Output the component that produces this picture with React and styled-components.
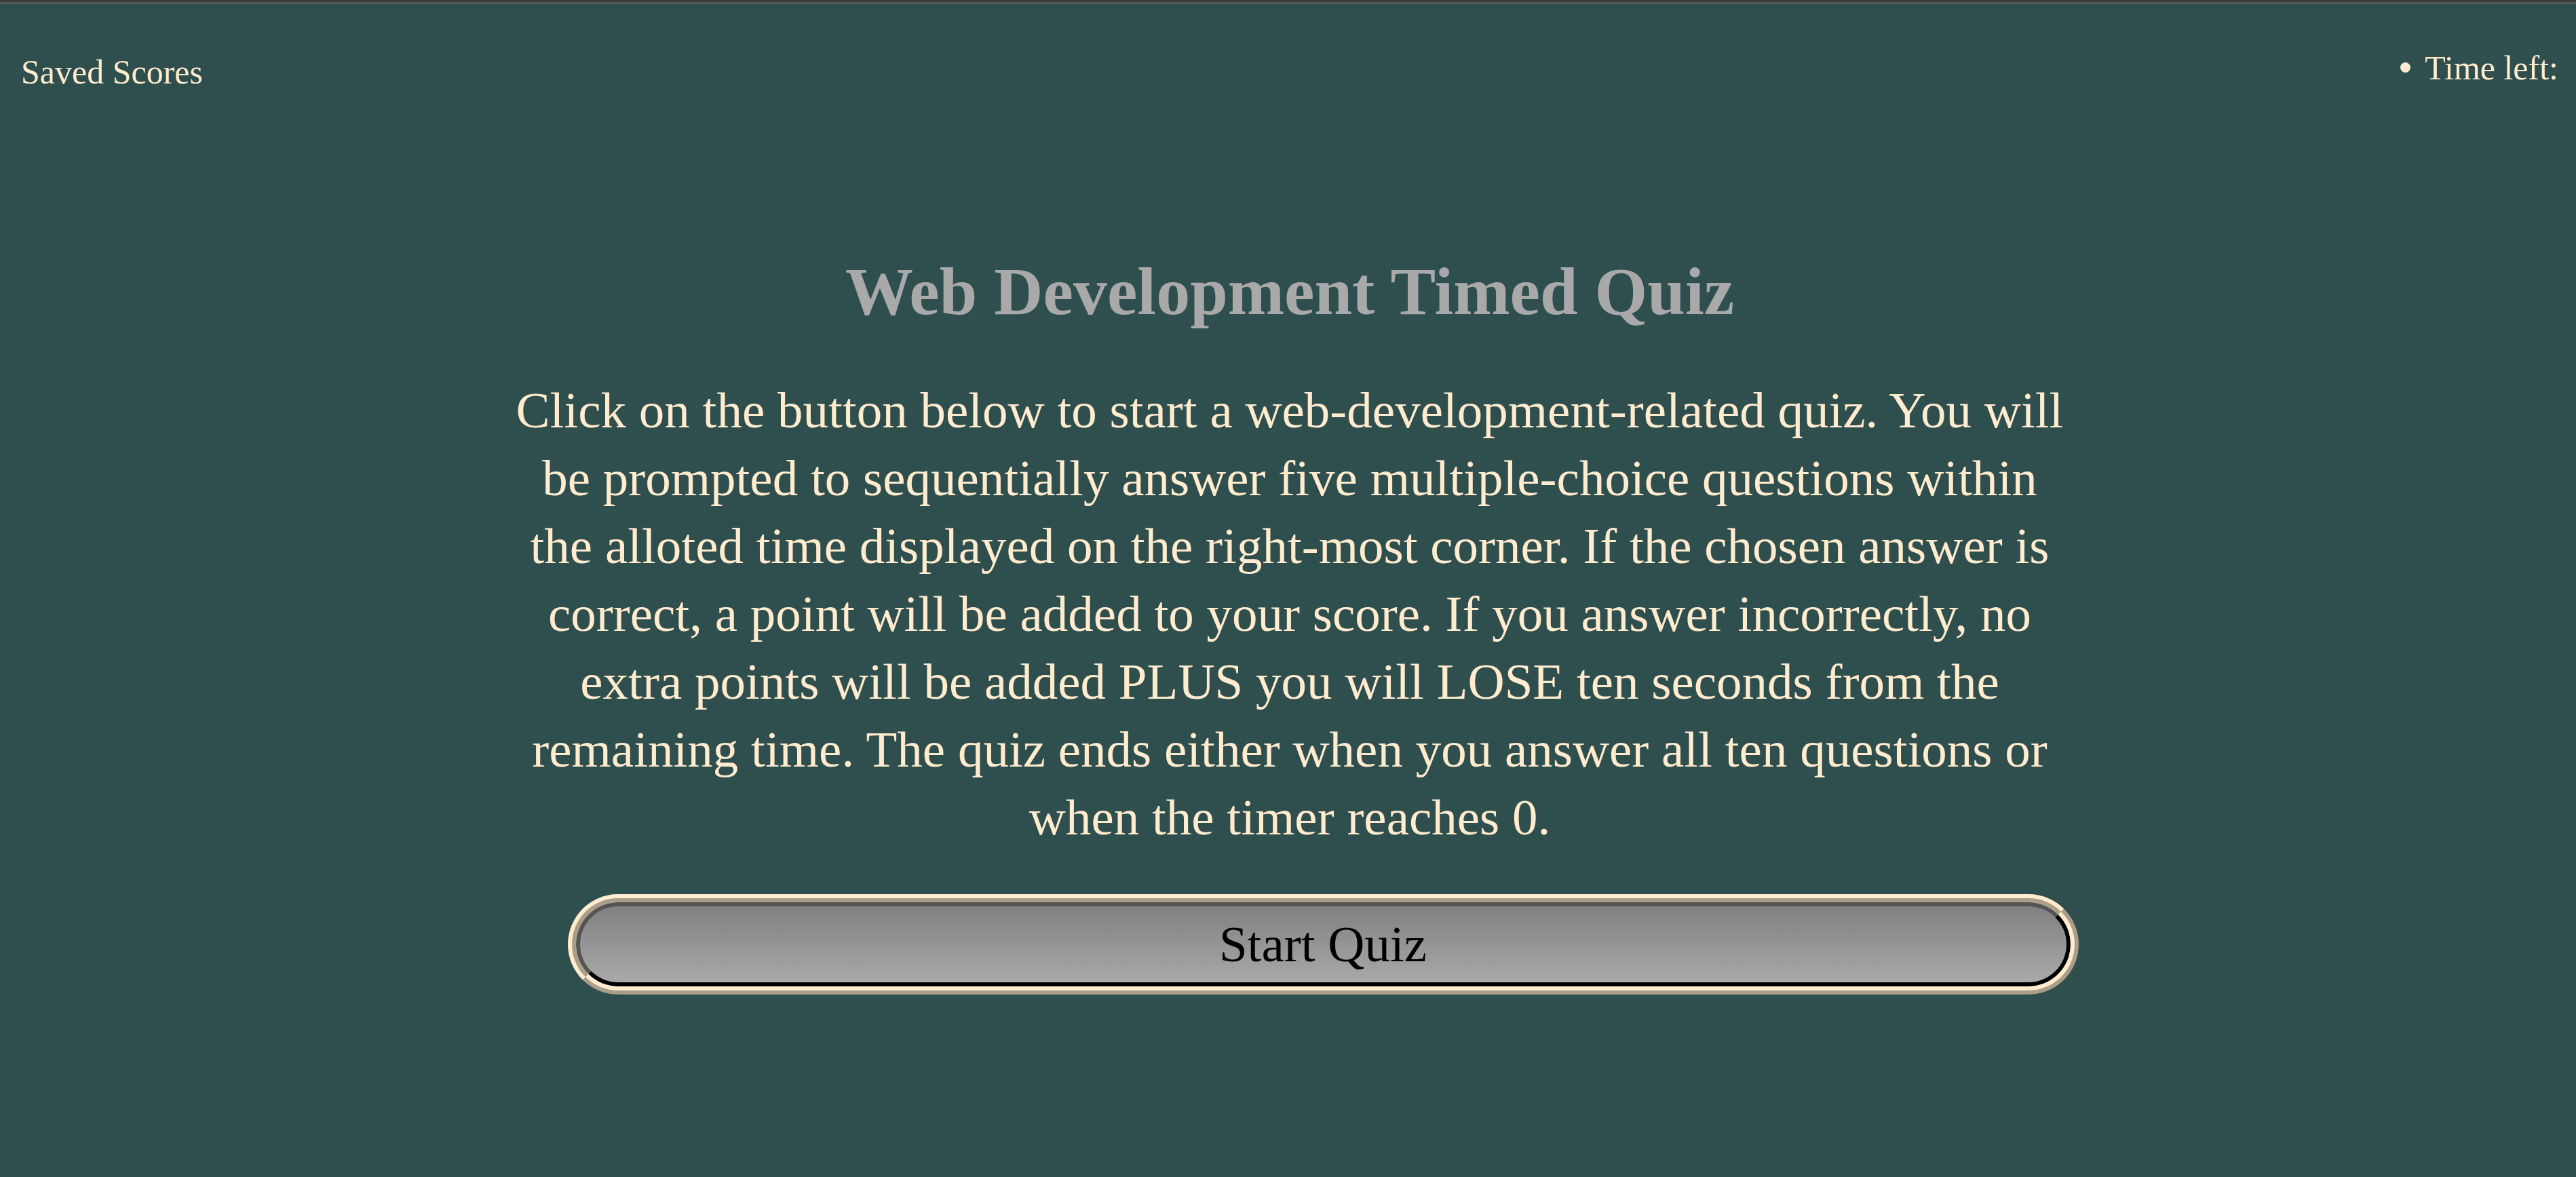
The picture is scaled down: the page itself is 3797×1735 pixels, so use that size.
import React from 'react';
import styled, { createGlobalStyle } from 'styled-components';

const GlobalStyle = createGlobalStyle`
    html, body {
        margin: 0;
        padding: 0;
        background-color: #2f4f4f;
    }

    body {
        font-family: "Liberation Serif", "Times New Roman", serif;
        color: #ffebcd;
        min-height: 100vh;
    }
`

function App() {
    return (
        <>
            <GlobalStyle />
            <Page>
                <TopEdge />
                <Header>
                    <SavedLink>Saved Scores</SavedLink>
                    <TimerList>
                        <TimerItem>
                            <Bullet />
                            Time left:
                        </TimerItem>
                    </TimerList>
                </Header>
                <Main>
                    <Title>Web Development Timed Quiz</Title>
                    <Intro>
                        Click on the button below to start a web-development-related quiz. You will be prompted to sequentially answer five multiple-choice questions within the alloted time displayed on the right-most corner. If the chosen answer is correct, a point will be added to your score. If you answer incorrectly, no extra points will be added PLUS you will LOSE ten seconds from the remaining time. The quiz ends either when you answer all ten questions or when the timer reaches 0.
                    </Intro>
                    <ButtonRow>
                        <StartButton type="button">Start Quiz</StartButton>
                    </ButtonRow>
                </Main>
            </Page>
        </>
    )
}

export default App

const Page = styled.div`
    min-height: 100vh;
    background-color: #2f4f4f;
`

const TopEdge = styled.div`
    height: 3px;
    background-color: #3b3b3e;
    border-bottom: 3px solid #58585a;
`

const Header = styled.header`
    display: flex;
    justify-content: space-between;
    align-items: flex-start;
    padding: 0 26px 0 31px;
    font-size: 50px;
`

const SavedLink = styled.a`
    margin-top: 71px;
    color: #ffebcd;
    cursor: pointer;
`

const TimerList = styled.ul`
    list-style: none;
    margin: 65px 0 0;
    padding: 0;
`

const TimerItem = styled.li`
    color: #ffebcd;
`

const Bullet = styled.span`
    display: inline-block;
    width: 15px;
    height: 15px;
    border-radius: 50%;
    background-color: #ffebcd;
    vertical-align: 10px;
    margin-right: 21px;
`

const Main = styled.main`
    display: flex;
    flex-direction: column;
    align-items: center;
    padding-left: 5px;
`

const Title = styled.h1`
    margin: 237px 0 68px;
    font-size: 100px;
    font-weight: bold;
    color: #a9a9a9;
    text-align: center;
`

const Intro = styled.p`
    width: 2300px;
    margin: 0 0 75px;
    font-size: 75px;
    line-height: 100px;
    text-align: center;
    color: #ffebcd;
`

const ButtonRow = styled.div`
    display: flex;
    justify-content: center;
    width: 100%;
`

const StartButton = styled.button`
    width: 2203px;
    margin-left: 98px;
    padding: 13px 0;
    border: 6px solid;
    border-color: #545454 #000 #000 #545454;
    border-radius: 70px;
    outline: 12px ridge #ffebcd;
    background: linear-gradient(#808080, #a9a9a9);
    font-family: "Liberation Serif", "Times New Roman", serif;
    font-size: 75px;
    color: #000;
    cursor: pointer;
`
